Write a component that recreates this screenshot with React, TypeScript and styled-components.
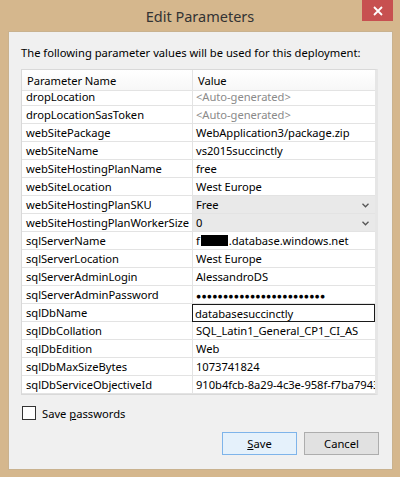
import React from 'react';
import styled, { createGlobalStyle, css } from 'styled-components';

const COLORS = {
  frame: '#d5b78d',
  client: '#f0f0f0',
  grid: '#e3e3e3',
  gridOuter: '#d9d9d9',
  muted: '#8a8a8a',
  close: '#c75050',
  combo: '#e9e9e9',
};

const GlobalStyle = createGlobalStyle`
  html, body {
    margin: 0;
    padding: 0;
    background: ${COLORS.frame};
  }
  body {
    font-family: "Noto Sans", "Open Sans", sans-serif;
  }
`;

const Window = styled.div`
  width: 400px;
  height: 477px;
  display: flex;
  flex-direction: column;
  background-color: ${COLORS.frame};
  box-sizing: border-box;
`;

const TitleBar = styled.div`
  height: 31px;
  display: grid;
  grid-template-columns: 1fr auto 1fr;
  flex-shrink: 0;
`;

const Title = styled.div`
  align-self: center;
  font-size: 14.5px;
  color: #333;
`;

const CloseButton = styled.div`
  justify-self: end;
  width: 31px;
  height: 21px;
  margin-right: 7px;
  background-color: ${COLORS.close};
  display: flex;
  align-items: center;
  justify-content: center;
`;

const Client = styled.div`
  flex: 1;
  margin: 0 7px 7px 8px;
  background-color: ${COLORS.client};
  border: 1px solid #c9b28f;
  display: flex;
  flex-direction: column;
  padding: 13px 13px 0 12px;
  font-size: 11.2px;
  color: #000;
`;

const Intro = styled.div`
  height: 16px;
  line-height: 16px;
  margin-bottom: 8px;
`;

const Grid = styled.div`
  display: grid;
  grid-template-columns: 170px 1fr;
  grid-auto-rows: 18px;
  width: 357px;
  background: #fff;
  border: 1px solid ${COLORS.gridOuter};
  border-right: 3px solid #e6e6e6;
  box-sizing: border-box;
`;

const Cell = styled.div<{ $header?: boolean; $value?: boolean; $muted?: boolean; $combo?: boolean; $editing?: boolean }>`
  border-bottom: 1px solid ${COLORS.grid};
  padding: 1px 0 0 4px;
  line-height: 16px;
  white-space: nowrap;
  overflow: hidden;
  display: flex;
  align-items: center;
  box-sizing: border-box;
  letter-spacing: -0.05px;
  ${(p) => p.$value && css`
    border-left: 1px solid ${COLORS.grid};
    padding-left: 3px;
  `}
  ${(p) => p.$header && css`
    height: 21px;
    line-height: 20px;
    padding-left: 5px;
    background: linear-gradient(#ffffff, #f7f7f7);
  `}
  ${(p) => p.$muted && css`color: ${COLORS.muted};`}
  ${(p) => p.$combo && css`
    background-color: ${COLORS.combo};
    justify-content: space-between;
    padding-right: 6px;
  `}
  ${(p) => p.$editing && css`
    border: 1px solid #1a1a1a;
    padding-left: 2px;
  `}
`;

const HeaderRow = styled.div`
  display: contents;
`;

const Redacted = styled.span`
  display: inline-block;
  width: 27px;
  height: 11px;
  background: #000;
  margin: 0 1px;
  vertical-align: -1px;
`;

const Dots = styled.span`
  letter-spacing: 0.2px;
  font-size: 8.6px;
`;

const Footer = styled.div`
  display: flex;
  flex-direction: column;
  padding-top: 9px;
`;

const CheckRow = styled.label`
  display: flex;
  align-items: center;
  gap: 6px;
  height: 18px;
  padding-left: 1px;
`;

const CheckBox = styled.span`
  width: 12px;
  height: 12px;
  border: 1px solid #333;
  background: #fff;
`;

const Buttons = styled.div`
  display: flex;
  justify-content: flex-end;
  gap: 7px;
  margin-top: 10px;
`;

const Button = styled.button<{ $default?: boolean }>`
  width: 75px;
  height: 23px;
  font: inherit;
  color: #000;
  border: 1px solid ${(p) => (p.$default ? '#7eb4ea' : '#adadad')};
  background: ${(p) => (p.$default ? '#e5f1fb' : '#e1e1e1')};
  padding: 0;
`;

const Chevron = () => (
  <svg width="7" height="5" viewBox="0 0 7 5">
    <path d="M0.5 0.8 L3.5 3.8 L6.5 0.8" fill="none" stroke="#555" strokeWidth="1.3" />
  </svg>
);

type Row = {
  name: string;
  value: React.ReactNode;
  muted?: boolean;
  combo?: boolean;
  editing?: boolean;
};

const rows: Row[] = [
  { name: 'dropLocation', value: '<Auto-generated>', muted: true },
  { name: 'dropLocationSasToken', value: '<Auto-generated>', muted: true },
  { name: 'webSitePackage', value: 'WebApplication3/package.zip' },
  { name: 'webSiteName', value: 'vs2015succinctly' },
  { name: 'webSiteHostingPlanName', value: 'free' },
  { name: 'webSiteLocation', value: 'West Europe' },
  { name: 'webSiteHostingPlanSKU', value: 'Free', combo: true },
  { name: 'webSiteHostingPlanWorkerSize', value: '0', combo: true },
  {
    name: 'sqlServerName',
    value: (
      <>
        f<Redacted />.database.windows.net
      </>
    ),
  },
  { name: 'sqlServerLocation', value: 'West Europe' },
  { name: 'sqlServerAdminLogin', value: 'AlessandroDS' },
  { name: 'sqlServerAdminPassword', value: <Dots>{'●'.repeat(24)}</Dots> },
  { name: 'sqlDbName', value: 'databasesuccinctly', editing: true },
  { name: 'sqlDbCollation', value: 'SQL_Latin1_General_CP1_CI_AS' },
  { name: 'sqlDbEdition', value: 'Web' },
  { name: 'sqlDbMaxSizeBytes', value: '1073741824' },
  { name: 'sqlDbServiceObjectiveId', value: '910b4fcb-8a29-4c3e-958f-f7ba7943a1' },
];

export default function App() {
  return (
    <>
      <GlobalStyle />
      <Window>
        <TitleBar>
          <div />
          <Title>Edit Parameters</Title>
          <CloseButton>
            <svg width="10" height="10" viewBox="0 0 10 10">
              <path d="M1 1 L9 9 M9 1 L1 9" stroke="#fff" strokeWidth="1.8" />
            </svg>
          </CloseButton>
        </TitleBar>
        <Client>
          <Intro>The following parameter values will be used for this deployment:</Intro>
          <Grid>
            <HeaderRow>
              <Cell $header>Parameter Name</Cell>
              <Cell $header $value>Value</Cell>
            </HeaderRow>
            {rows.map((r) => (
              <React.Fragment key={r.name}>
                <Cell>{r.name}</Cell>
                <Cell $value $muted={r.muted} $combo={r.combo} $editing={r.editing}>
                  <span>{r.value}</span>
                  {r.combo && <Chevron />}
                </Cell>
              </React.Fragment>
            ))}
          </Grid>
          <Footer>
            <CheckRow>
              <CheckBox />
              <span>
                Save <u>p</u>asswords
              </span>
            </CheckRow>
            <Buttons>
              <Button $default>
                <u>S</u>ave
              </Button>
              <Button>Cancel</Button>
            </Buttons>
          </Footer>
        </Client>
      </Window>
    </>
  );
}
